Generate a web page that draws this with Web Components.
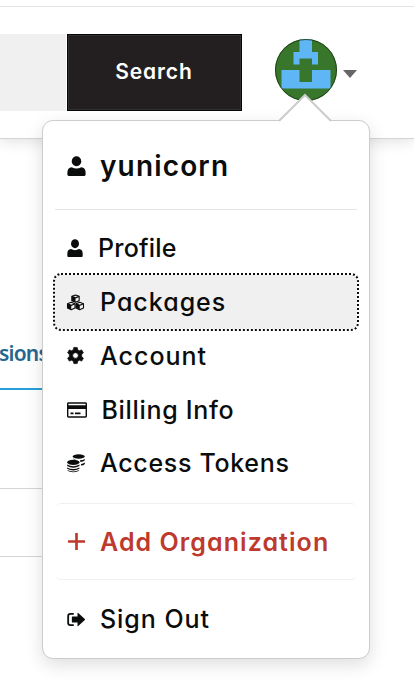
<!DOCTYPE html>
<html lang="en"><head><meta charset="utf-8"><title>Account menu</title>
<style>
html,body{margin:0;height:100%;background:#fff;overflow:hidden}
body{font-family:Inter,"Liberation Sans",sans-serif;color:#0b0c0c}
</style></head><body>
<app-shell></app-shell>
<script>
const def=(name,html)=>customElements.define(name,class extends HTMLElement{
  constructor(){super();this.attachShadow({mode:'open'}).innerHTML=html;}
});

const ICONS={
  user:'<circle cx="10" cy="5.2" r="5"/><path d="M5 11.2Q10 13.6 15 11.2Q19.6 11.6 19.6 16.5V18.6Q19.6 20 18.2 20H1.8Q.4 20 .4 18.6V16.5Q.4 11.6 5 11.2Z"/>',
  cubes:'<g stroke="#0b0c0c" stroke-width="1.3" stroke-linejoin="round" fill="#f0f0f0"><path d="M10 1.200l4.300 1.600v5l-4.300 2-4.300-2v-5Z"/><path d="M5 9.800l4.400 1.700v4.900l-4.400 2-4.400-2v-4.900Z"/><path d="M15 9.800l4.400 1.700v4.900l-4.400 2-4.400-2v-4.900Z"/></g><path d="M5.700 2.800l4.300 1.700v5.300l-4.300-2ZM.6 11.500l4.400 1.800v5.100l-4.400-2ZM10.600 11.500l4.400 1.800v5.100l-4.400-2Z"/><path d="M5.700 2.800l4.300 1.700 4.300-1.700M.6 11.500l4.400 1.800 4.400-1.800M10.600 11.500l4.400 1.800 4.400-1.800" fill="none" stroke="#0b0c0c" stroke-width="1.300"/>',
  cog:'<path fill-rule="evenodd" d="M8 .5h4l.6 2.800 2 1.100 2.700-1 2 3.500-2.100 1.900v2.400l2.100 1.900-2 3.500-2.700-1-2 1.100-.6 2.800H8l-.6-2.800-2-1.100-2.700 1-2-3.500 2.100-1.900V8.800L.7 6.900l2-3.500 2.700 1 2-1.100ZM10 6.700a3.300 3.300 0 1 0 0 6.600 3.300 3.300 0 0 0 0-6.600Z" stroke="currentColor" stroke-width=".8" stroke-linejoin="round"/>',
  card:'<path fill-rule="evenodd" d="M1.500 2.300h17q1.500 0 1.500 1.400v12.600q0 1.400-1.500 1.400h-17Q0 17.700 0 16.300V3.700Q0 2.300 1.500 2.300ZM1.400 3.700v1.500h17.200V3.700ZM1.400 9v7.300h17.200V9Z"/><path d="M3.500 12.500h3V14.200h-3ZM8 12.500h5.500V14.200H8Z"/>',
  coins:'<g><ellipse cx="13" cy="2.800" rx="6.800" ry="2.500"/><path d="M14.500 7q3.300-.2 5.300-1.500v1.500q-1.500 1.800-5 2ZM15.500 11q2.500-.3 4.300-1.500v1.500q-1.300 1.600-4.300 1.900ZM6.200 4.600q2 1 4 1.200L8 6.200Z"/><ellipse cx="7" cy="9.300" rx="6.800" ry="2.900"/><path d="M.2 11.800q6.800 3.600 13.600 0v1.600q-6.800 3.900-13.600 0ZM.2 15q6.800 3.400 13.600 0v1.400q-6.800 3.800-13.600 0ZM.2 17.800q6.800 3.200 13.600 0Q12.500 20.200 7 20.200T.2 17.800Z"/></g>',
  plus:'<path d="M8.600 1h2.800v7.600H19v2.800h-7.600V19H8.600v-7.600H1V8.600h7.600Z"/>',
  out:'<path d="M7.500 3.300H3.800Q1.300 3.300 1.300 5.800v8.400Q1.300 16.700 3.800 16.700h3.700" fill="none" stroke="currentColor" stroke-width="2"/><path d="M6 6.600h5.700V2.600q0-.9.800-.3l7.300 7q.6.700 0 1.400l-7.300 7q-.8.600-.8-.3v-4H6q-.6 0-.6-.6V7.200q0-.6.600-.6Z"/>'
};
customElements.define('menu-icon',class extends HTMLElement{
  connectedCallback(){
    this.attachShadow({mode:'open'}).innerHTML=`<style>:host{display:block;flex:none}svg{display:block;width:100%;height:100%;overflow:visible}</style><svg viewBox="0 0 20 20" preserveAspectRatio="none" fill="currentColor">${ICONS[this.getAttribute('name')]}</svg>`;
  }
});

def('menu-row',`<style>
:host{display:flex;align-items:center;height:var(--h,53.800px);padding-left:12px;box-sizing:border-box;font-size:25px;font-weight:500;white-space:nowrap;font-feature-settings:"cv11";line-height:30px;letter-spacing:var(--track,1px)}
:host([active]){background:#f0f0f0;outline:2px dotted #0b0c0c;border-radius:6px}
slot[name=icon]{display:block;width:var(--gutter,33px);flex:none}
</style><slot name="icon"></slot><span><slot></slot></span>`);

def('account-menu',`<style>
:host{display:block;position:absolute;left:42px;top:120px;width:328px;height:539px;box-sizing:border-box;background:#fff;border:1px solid #ccc;border-radius:11px;box-shadow:0 6px 18px rgba(0,0,0,.13);padding:0 12px}
.tip{position:absolute;left:235px;top:-28px;width:54px;height:29px;display:block}
.head{--h:89px;--track:1.150px;border-bottom:1px solid #e4e4e4;font-size:28px;font-weight:600;padding-top:1px}
.rows{display:flex;flex-direction:column;padding:11px 0 13px}
.add{border-top:1px solid #f0f0f0;border-bottom:1px solid #f0f0f0;border-radius:6px;color:#be3a2d;font-weight:600;--h:77px;--track:1.070px}
menu-icon{width:17px;height:17px}
.out{--h:78px;--track:.950px}
</style>
<svg class="tip" viewBox="0 0 54 29"><path d="M1 28L27 2 53 28V29H1Z" fill="#fff"/><path d="M1 28L27 2 53 28" fill="none" stroke="#ccc" stroke-width="2"/></svg>
<menu-row class="head"><menu-icon slot="icon" name="user" style="width:19px;height:20px"></menu-icon>yunicorn</menu-row>
<div class="rows">
<menu-row style="--gutter:31px;--h:54px;--track:.200px"><menu-icon slot="icon" name="user" style="width:16px;height:18px"></menu-icon>Profile</menu-row>
<menu-row active style="--h:54px"><menu-icon slot="icon" name="cubes"></menu-icon>Packages</menu-row>
<menu-row><menu-icon slot="icon" name="cog"></menu-icon>Account</menu-row>
<menu-row style="--gutter:34.500px;--track:.680px"><menu-icon slot="icon" name="card" style="width:20px;height:20px"></menu-icon>Billing Info</menu-row>
<menu-row style="--track:.680px"><menu-icon slot="icon" name="coins" style="width:18px;height:18px"></menu-icon>Access Tokens</menu-row>
</div>
<menu-row class="add"><menu-icon slot="icon" name="plus" style="width:19px;height:19px"></menu-icon>Add Organization</menu-row>
<menu-row class="out"><menu-icon slot="icon" name="out" style="width:18px"></menu-icon>Sign Out</menu-row>`);

def('user-avatar',`<style>:host{display:block;width:62px;height:62px;flex:none}svg{display:block}</style>
<svg width="62" height="62"><defs><clipPath id="c"><circle cx="31" cy="31" r="31"/></clipPath></defs><g clip-path="url(#c)"><path fill="#38762b" d="M0 0h62v62H0Z"/><path fill="#5eb6f5" d="M24.500 0h12.500v13h6v12.500h-6v-6H24.500v6h-6V13h6ZM6.500 31h18v12h12.500v-12h18.500v18.500h-49Z"/></g><circle cx="31" cy="31" r="30.500" fill="none" stroke="#183514" stroke-opacity=".8"/></svg>`);

def('site-header',`<style>
:host{display:flex;align-items:flex-start;box-sizing:border-box;height:139px;padding-top:34px;border-bottom:1px solid #d4d4d4;box-shadow:0 2px 14px rgba(0,0,0,.13);background:linear-gradient(#fff 6px,#e4e4e4 6px 7px,#fff 7px)}
.field{width:66px;height:77px;background:#f0f0f0;margin-right:1px;flex:none}
button{font:600 21px/73px Inter,"Liberation Sans",sans-serif;font-feature-settings:"cv11";letter-spacing:.900px;width:175px;height:77px;background:#231f20;color:#fff;border:1px solid #060606;box-shadow:inset 0 0 0 1px #30302f;padding:0 1px 2px 0}
user-avatar{margin:5px 6px 0 32.500px}
.caret{margin-top:35.500px;border:7.500px solid transparent;border-top:8px solid #666;border-bottom:0}
</style><div class="field"></div><button><span>Search</span></button><user-avatar></user-avatar><div class="caret"></div>`);

def('package-page',`<style>
:host{display:block;padding-top:200px;width:60px}
.tab{height:49px;border-bottom:2px solid #279fd8;font:600 21px/29px "Noto Sans",sans-serif;color:#24688f;letter-spacing:-.800px;text-indent:-1px}
.row{border-bottom:1px solid #d4d4d4;height:98px}.row+.row{height:67px}
</style><div class="tab">sions</div><div class="row"></div><div class="row"></div>`);

def('app-shell',`<style>:host{display:block;position:relative;height:690px;overflow:hidden}</style>
<site-header></site-header><package-page></package-page><account-menu></account-menu>`);
</script>
</body></html>
